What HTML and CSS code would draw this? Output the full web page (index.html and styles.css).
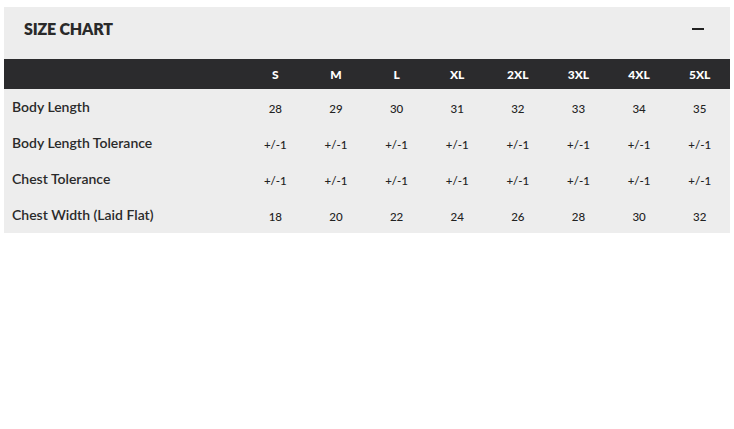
FILE: index.html
```html
<!DOCTYPE html>
<html>
<head>
<meta charset="utf-8">
<link rel="stylesheet" href="styles.css">
</head>
<body>
<div class="page">
  <section class="panel">
    <div class="panel-head">
      <h2 class="title">SIZE CHART</h2>
      <span class="toggle"></span>
    </div>
    <table class="chart">
      <thead>
        <tr>
          <th class="lab"></th>
          <th>S</th><th>M</th><th>L</th><th>XL</th><th>2XL</th><th>3XL</th><th>4XL</th><th>5XL</th>
        </tr>
      </thead>
      <tbody>
        <tr><td class="lab">Body Length</td><td>28</td><td>29</td><td>30</td><td>31</td><td>32</td><td>33</td><td>34</td><td>35</td></tr>
        <tr><td class="lab">Body Length Tolerance</td><td>+/-1</td><td>+/-1</td><td>+/-1</td><td>+/-1</td><td>+/-1</td><td>+/-1</td><td>+/-1</td><td>+/-1</td></tr>
        <tr><td class="lab">Chest Tolerance</td><td>+/-1</td><td>+/-1</td><td>+/-1</td><td>+/-1</td><td>+/-1</td><td>+/-1</td><td>+/-1</td><td>+/-1</td></tr>
        <tr><td class="lab">Chest Width (Laid Flat)</td><td>18</td><td>20</td><td>22</td><td>24</td><td>26</td><td>28</td><td>30</td><td>32</td></tr>
      </tbody>
    </table>
  </section>
</div>
</body>
</html>
```
FILE: styles.css
```css
html, body { margin: 0; padding: 0; background: #fff; }
body { font-family: Lato, "Noto Sans", sans-serif; color: #222; }
.page { padding: 7px 4px; }
.panel { background: #ededed; width: 726px; }
.panel-head {
  height: 52px;
  display: flex;
  align-items: flex-start;
  justify-content: space-between;
  padding: 13px 26px 0 20px;
  box-sizing: border-box;
}
.title { margin: 0; font-size: 16px; line-height: 18px; font-weight: 800; color: #2a2a2a; letter-spacing: -0.2px; }
.toggle { width: 12px; height: 2px; background: #222; margin-top: 8px; }
.chart { width: 100%; border-collapse: collapse; table-layout: fixed; }
.chart th {
  box-sizing: border-box;
  background: #2b2b2d;
  color: #fff;
  height: 30px;
  padding: 0;
  font-size: 12px;
  font-weight: 900;
  text-align: center;
}
.chart th.lab { width: 241px; }
.chart td {
  box-sizing: border-box;
  height: 36px;
  padding: 3px 0 0;
  font-size: 11.5px;
  font-weight: 500;
  text-align: center;
  color: #222;
}
.chart td.lab {
  text-align: left;
  padding: 0 0 2px 8px;
  font-size: 14px;
  font-weight: 600;
  color: #2a2a2a;
}
```
